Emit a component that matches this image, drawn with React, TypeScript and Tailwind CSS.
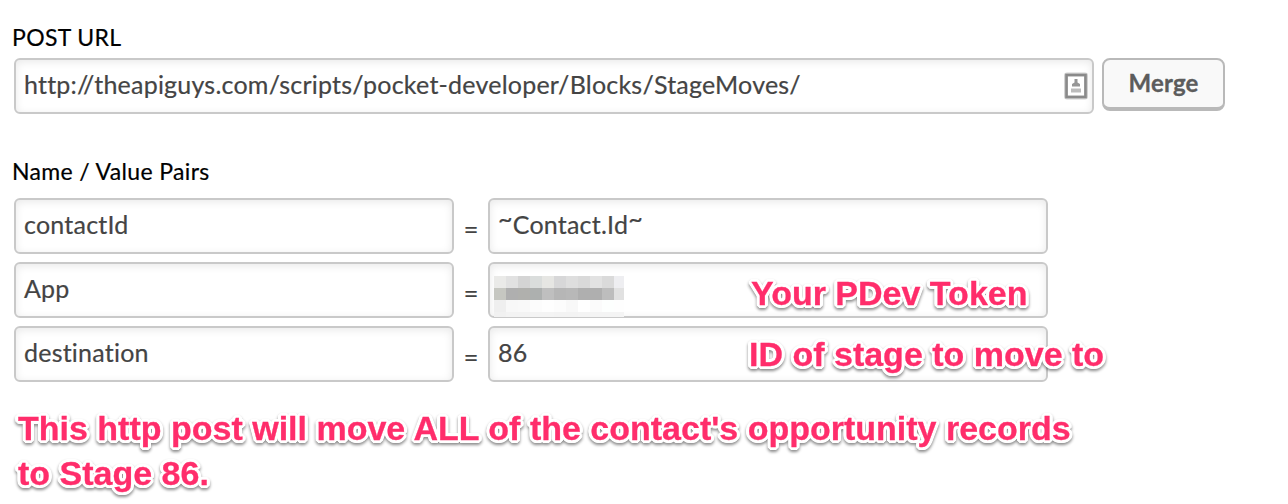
import React from 'react';

const outline = '[text-shadow:3px_0_#fff,-3px_0_#fff,0_3px_#fff,0_-3px_#fff,2px_2px_#fff,-2px_2px_#fff,2px_-2px_#fff,-2px_-2px_#fff,3px_1px_#fff,3px_-1px_#fff,-3px_1px_#fff,-3px_-1px_#fff,1px_3px_#fff,-1px_3px_#fff,1px_-3px_#fff,-1px_-3px_#fff] [filter:drop-shadow(0_2px_1.5px_rgba(0,0,0,0.45))]';
const note = `font-["Liberation_Sans"] font-bold text-[#ff2d6b] [-webkit-text-stroke:0.3px_#ff2d6b] whitespace-nowrap ${outline}`;
const field = 'relative flex h-14 items-center rounded-md border-2 border-[#c9c9c9] bg-white pl-2 pb-[2px] text-[25px] tracking-[0.22px] text-[#444] shadow-[inset_0_2px_8px_rgba(0,0,0,0.09)] whitespace-nowrap';
const label = '-ml-[2px] text-[23px] leading-[26px] tracking-[0.35px] text-black [-webkit-text-stroke:0.2px_black]';
const value = '[-webkit-text-stroke:0.2px_#444]';

// Rows of the blurred-out token, one colour per block
const mosaic = [
  ['#eaeae8', '#e1e1e1', '#d4d4d4', '#dadddc', '#e6e6e3', '#d7d7d8', '#dedede', '#d9d9d9', '#e2e2e2', '#dadada', '#eeeef1'],
  ['#c6c7c1', '#afafaf', '#b0b0ad', '#adb0af', '#bfbfbf', '#b6b6b6', '#b8b8b8', '#afafaf', '#afafaf', '#bdbdbd', '#e1e1e1'],
  ['#efefef', '#f8f8f8', '#f9f9f9', '#fcfcfc', '#fefefe', '#fcfcfc', '#f8f8f8', '#ffffff', '#fbfbfb', '#fdfffe', '#fefefe'],
  ['#f1f1f1', '#f3f3f3', '#f3f3f3', '#f4f4f4', '#f4f4f4', '#f3f3f3', '#f3f3f3', '#f4f4f4', '#f4f4f4', '#f4f4f4', '#f4f4f4'],
];

function Mosaic() {
  return (
    <div className="absolute left-1 top-3 h-[41px] w-[130px] overflow-hidden">
      {mosaic.map((row, i) => (
        <div key={i} className="flex h-3">
          {row.map((color, j) => (
            <span key={j} className="h-3 w-3 shrink-0 last:w-[10px]" style={{ backgroundColor: color }} />
          ))}
        </div>
      ))}
    </div>
  );
}

function ContactIcon() {
  return (
    <svg className="absolute right-[3px] top-[11px] h-[30px] w-[26px]" viewBox="0 0 26 30" fill="none">
      <rect x="3" y="3.5" width="20" height="23" rx="1" stroke="#b5b5b5" strokeWidth="4" opacity="0.6" />
      <rect x="3.5" y="4" width="19" height="22" stroke="#8a8a8a" strokeWidth="2.6" />
      <path d="M11.5 8h3v3.5l2.5 1.5v2.5H9V13l2.5-1.5z" fill="#969696" />
      <path d="M8 17.5h10v4H8z" fill="#bcbcbc" />
    </svg>
  );
}

function Pair({ name, children }: { name: string; children: React.ReactNode }) {
  return (
    <div className="flex">
      <div className={`${field} w-[440px]`}>
        <span className={value}>{name}</span>
      </div>
      <div className="flex w-[34px] items-center justify-center pt-[6px] text-[26px] text-[#444]">=</div>
      <div className={`${field} w-[560px]`}>{children}</div>
    </div>
  );
}

function App() {
  return (
    <div className="h-[504px] w-[1288px] overflow-hidden bg-white pl-[14px] pt-6 font-[Lato,sans-serif] [font-variant-ligatures:none]">
      <div className={`${label} h-[34px]`}>
        <span>POST URL</span>
      </div>
      <div className="flex gap-2">
        <div className={`${field} w-[1080px]`}>
          <span className={value}>http://theapiguys.com/scripts/pocket-developer/Blocks/StageMoves/</span>
          <ContactIcon />
        </div>
        <button className="h-[53px] w-[123px] rounded-lg border-2 border-b-4 border-[#b9b9b9] bg-[#f9f9f9] pb-[2px] text-[24px] font-bold tracking-[0.2px] text-[#5c5c5c] [-webkit-text-stroke:0.3px_#5c5c5c]">
          Merge
        </button>
      </div>

      <div className={`${label} mt-11 h-10`}>
        <span>Name / Value Pairs</span>
      </div>
      <div className="flex flex-col gap-2">
        <Pair name="contactId">
          <span className={value}>
            <span className="relative -top-[6px]">~</span>Contact.Id<span className="relative -top-[6px]">~</span>
          </span>
        </Pair>
        <Pair name="App">
          <Mosaic />
          <span className={`${note} absolute left-[261px] top-[9px] text-[34px] leading-[40px] tracking-normal`}>Your PDev Token</span>
        </Pair>
        <Pair name="destination">
          <span className={value}>86</span>
          <span className={`${note} absolute left-[259px] top-[6px] text-[34px] leading-[40px] tracking-normal`}>ID of stage to move to</span>
        </Pair>
      </div>

      <p className={`${note} ml-[4px] mt-[24px] text-[34px] leading-[45px]`}>
        This http post will move ALL of the contact's opportunity records
        <br />
        to Stage 86.
      </p>
    </div>
  );
}

export default App;
